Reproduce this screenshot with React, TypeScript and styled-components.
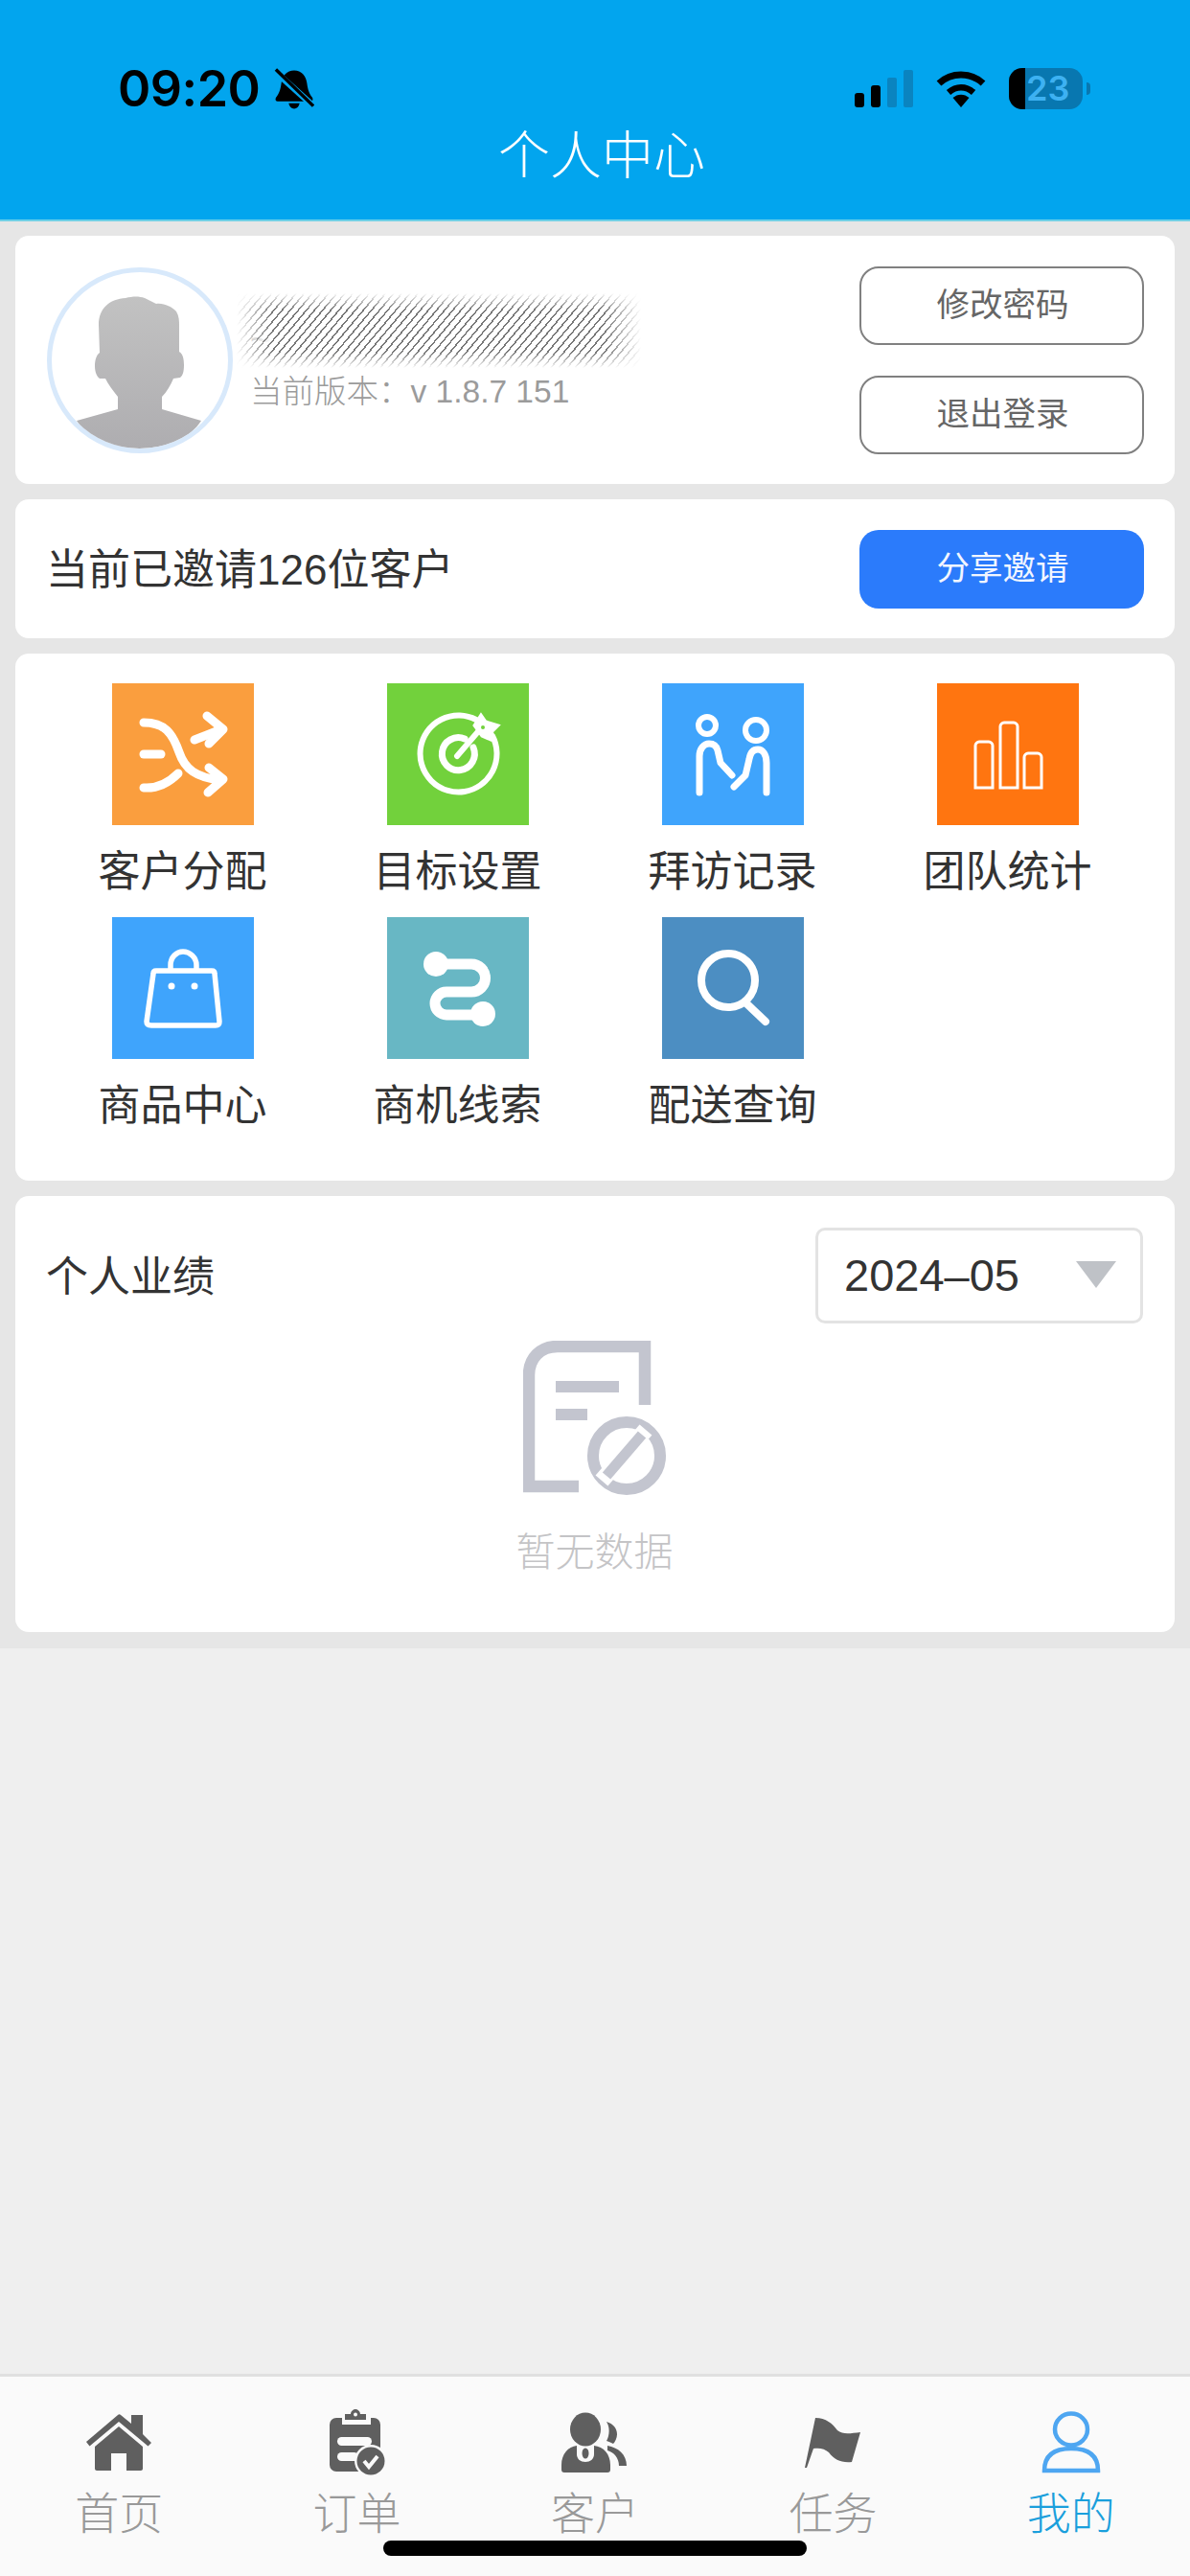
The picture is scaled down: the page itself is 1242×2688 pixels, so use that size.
import React from "react";
import styled, { createGlobalStyle } from "styled-components";

// ---------- status bar glyphs ----------

const MutedBell = () => (
    <svg width="42" height="45" viewBox="0 0 44 46">
        <path d="M22 3c8 0 13 6 14 14 1 7 2 11 6 16 1 2 0 4-2 4H4c-2 0-3-2-2-4 4-5 5-9 6-16C9 9 14 3 22 3z" fill="#000" />
        <path d="M16 39h12c-1 4-3 6-6 6s-5-2-6-6z" fill="#000" />
        <path d="M1 4l42 38" stroke="#02a5ee" strokeWidth="7" />
        <path d="M2 2l41 40" stroke="#000" strokeWidth="3.6" />
    </svg>
);

const SignalBars = () => (
    <svg width="61" height="39" viewBox="0 0 61 39">
        <rect x="0" y="24" width="10" height="15" rx="3" fill="#000" />
        <rect x="17" y="16" width="10" height="23" rx="3" fill="#000" />
        <rect x="34" y="8" width="10" height="31" rx="2" fill="#0a84c0" />
        <rect x="51" y="0" width="10" height="39" rx="2" fill="#0a84c0" />
    </svg>
);

const Wifi = () => (
    <svg width="52" height="39" viewBox="0 0 52 39" fill="none">
        <path d="M3 14C16 2 36 2 49 14" stroke="#000" strokeWidth="7" />
        <path d="M13 23.5c8-7 18-7 26 0" stroke="#000" strokeWidth="6.5" />
        <path d="M17.5 29c5-4.500 12-4.500 17 0L26 39z" fill="#000" />
    </svg>
);

const tinyIcon = "#5f5f5f";

// ---------- tab bar icons ----------

const HomeIcon = ({ color }: { color: string }) => (
    <svg width="70" height="60" viewBox="0 0 70 60" fill={color}>
        <path d="M1 29L34 1c1-1 2-1 3 0l11 9V1h12v20l9 9-3.500 3.500L35 8 4.500 33.500z" />
        <path d="M35 13l25 21v23c0 1-1 2-2 2H43V41H27v18H12c-1 0-2-1-2-2V34z" />
    </svg>
);

const OrderIcon = ({ color }: { color: string }) => (
    <svg width="58" height="70" viewBox="0 0 58 70">
        <rect x="0" y="9" width="53" height="56" rx="7" fill={color} />
        <path d="M13 8h30v8H13z" fill="#fafafa" />
        <path d="M16 11V5h6c0-3 3-5 5-5s5 2 5 5h6v6z" fill={color} />
        <circle cx="27" cy="5.500" r="2" fill="#fafafa" />
        <rect x="8" y="29" width="36" height="9" rx="4.500" fill="#fafafa" />
        <rect x="8" y="45" width="22" height="9" rx="4.500" fill="#fafafa" />
        <circle cx="43" cy="54" r="17" fill="#fafafa" />
        <circle cx="43" cy="54" r="14.500" fill={color} />
        <path d="M36 54l5 6 9-11" stroke="#fafafa" strokeWidth="4" fill="none" />
    </svg>
);

const CustomerIcon = ({ color }: { color: string }) => (
    <svg width="70" height="64" viewBox="0 0 70 64" fill={color}>
        <ellipse cx="25" cy="18" rx="16" ry="17.500" />
        <path d="M47 10c7 2 11 7 11 13 0 4-2 8-4 10-2-1-4-2-7-3 3-5 4-14 0-20z" />
        <path d="M48 35c11 2 20 9 20 21h-8c0-8-5-14-12-16z" />
        <path d="M16 35v9c0 5 4 8 9 8s9-3 9-8v-9c10 1 17 9 17 20v5c0 2-1 3-3 3H3c-2 0-3-1-3-3v-5c0-11 7-19 16-20z" />
        <ellipse cx="25" cy="43" rx="3.500" ry="5.500" />
    </svg>
);

const TaskIcon = ({ color }: { color: string }) => (
    <svg width="60" height="53" viewBox="0 0 60 53" fill={color}>
        <path d="M12 0c11 0 18 6 23 13 6 5 14 3 24 2L50 46c-11 1-18-2-24-10-4-4-10-5-16-4L3 52H1z" />
    </svg>
);

const MineIcon = ({ color }: { color: string }) => (
    <svg width="62" height="66" viewBox="0 0 62 66" fill="none" stroke={color} strokeWidth="4.500">
        <ellipse cx="31" cy="19" rx="17" ry="16.500" />
        <path d="M3 62c0-17 11-23 28-23s28 6 28 23z" />
    </svg>
);

// ---------- feature tile icons, all on a 148 square ----------

const ShuffleIcon = () => (
    <svg width="148" height="148" viewBox="0 0 148 148" fill="none" stroke="#fff" strokeWidth="9" strokeLinecap="round" strokeLinejoin="round">
        <path d="M33 41c22 0 30 11 37 31 6 18 18 26 42 29" />
        <path d="M101 88l15 12-16 14" />
        <path d="M86 59l28-11" />
        <path d="M99 34l17 14-15 15" />
        <path d="M33 74h18" />
        <path d="M33 109c14 1 26-5 36-15" />
    </svg>
);

const TargetIcon = () => (
    <svg width="148" height="148" viewBox="0 0 148 148" fill="none" stroke="#fff" strokeLinecap="round">
        <path d="M93 38A40 40 0 1 0 110 55" strokeWidth="6" />
        <path d="M81 58A17 17 0 1 0 90 67" strokeWidth="7" />
        <path d="M73 76L97 48" strokeWidth="6" />
        <path d="M91 44l7-11 5 7 13 4-6 6-2 9-9-4z" fill="#fff" strokeWidth="3" />
        <circle cx="100" cy="46" r="2" fill="#72d13c" stroke="none" />
    </svg>
);

const VisitIcon = () => (
    <svg width="148" height="148" viewBox="0 0 148 148" fill="none" stroke="#fff" strokeWidth="7" strokeLinecap="round" strokeLinejoin="round">
        <circle cx="47" cy="44" r="9" strokeWidth="6" />
        <circle cx="98" cy="49" r="11" strokeWidth="6" />
        <path d="M39 114V76c0-8 5-13 10-13 5 0 8 3 9 7l3 13 12 13" />
        <path d="M109 114V83c0-9-4-14-9-14-5 0-8 4-9 10l-4 17-12 12" />
    </svg>
);

const BarsIcon = () => (
    <svg width="148" height="148" viewBox="0 0 148 148" fill="none" stroke="#fff" strokeWidth="3">
        <path d="M40 109V65c0-2 2-4 4-4h10c2 0 4 2 4 4v44z" />
        <path d="M66 109V45c0-2 2-4 4-4h10c2 0 4 2 4 4v64z" />
        <path d="M91 109V77c0-2 2-4 4-4h10c2 0 4 2 4 4v32z" />
    </svg>
);

const BagIcon = () => (
    <svg width="148" height="148" viewBox="0 0 148 148" fill="none" stroke="#fff" strokeWidth="5.500" strokeLinejoin="round">
        <path d="M46 56h58c2 0 3 1 3 3l5 50c0 3-1 4-4 4H41c-3 0-5-1-5-4l7-50c0-2 1-3 3-3z" />
        <path d="M61 56V50c0-8 6-14 13-14s14 6 14 14v6" />
        <circle cx="62" cy="72" r="3.500" fill="#fff" stroke="none" />
        <circle cx="86" cy="72" r="3.500" fill="#fff" stroke="none" />
    </svg>
);

const RouteIcon = () => (
    <svg width="148" height="148" viewBox="0 0 148 148" fill="none" stroke="#fff" strokeWidth="11">
        <path d="M51 49H88A14.500 14.500 0 0 1 88 78H62A12 12 0 0 0 62 102H99" />
        <circle cx="51" cy="49" r="13" fill="#fff" stroke="none" />
        <circle cx="100" cy="101" r="13" fill="#fff" stroke="none" />
    </svg>
);

const SearchIcon = () => (
    <svg width="148" height="148" viewBox="0 0 148 148" fill="none" stroke="#fff" strokeWidth="8" strokeLinecap="round">
        <circle cx="69" cy="66" r="28" />
        <path d="M89 91l19 18" />
    </svg>
);

const EmptyDocIcon = () => (
    <svg width="150" height="161" viewBox="0 0 150 161" fill="none" stroke="#c3c5cf">
        <path d="M127 67V6H36C18 6 6 18 6 36V152H58" strokeWidth="12.500" />
        <path d="M34 48h66M34 77h33" strokeWidth="12" />
        <circle cx="108" cy="120" r="35" strokeWidth="12" />
        <path d="M82 146l46-53" stroke="#fff" strokeWidth="17" />
        <path d="M87 141l37-43" strokeWidth="11" />
    </svg>
);

const AvatarFigure = () => (
    <svg width="184" height="184" viewBox="5 5 184 184">
        <defs>
            <linearGradient id="figura" x1="0" y1="0" x2="0" y2="1">
                <stop offset="0" stopColor="#c2c2c2" />
                <stop offset="1" stopColor="#aeadb0" />
            </linearGradient>
        </defs>
        <path
            d="M54 60C54 42 66 33 82 32c8-2 14-2 20 0 4 2 8 4 12 6 8-1 16 3 21 8 3 5 3 10 3 15v27c4 2 5 8 5 14 0 6-1 11-4 13l-7 1c-3 7-7 14-12 19v13l41 12c-11 18-37 29-65 29s-54-11-65-29l43-12v-13c-5-6-10-13-13-19h-6c-3-2-5-7-5-13 0-7 2-12 5-14z"
            fill="url(#figura)"
        />
    </svg>
);

const tabs = [
    { label: "首页", Icon: HomeIcon },
    { label: "订单", Icon: OrderIcon },
    { label: "客户", Icon: CustomerIcon },
    { label: "任务", Icon: TaskIcon },
    { label: "我的", Icon: MineIcon, active: true },
];

const features = [
    { label: "客户分配", color: "#fa9e3e", Icon: ShuffleIcon },
    { label: "目标设置", color: "#72d13c", Icon: TargetIcon },
    { label: "拜访记录", color: "#3fa4fc", Icon: VisitIcon },
    { label: "团队统计", color: "#ff7510", Icon: BarsIcon },
    { label: "商品中心", color: "#3fa4fc", Icon: BagIcon },
    { label: "商机线索", color: "#68b7c4", Icon: RouteIcon },
    { label: "配送查询", color: "#4c8ec2", Icon: SearchIcon },
];

const App = () => {
    return (
        <>
            <GlobalStyle />
            <Page>
                <Header>
                    <StatusBar>
                        <StatusGroup>
                            <Clock>09:20</Clock>
                            <MutedBell />
                        </StatusGroup>
                        <StatusGroup>
                            <SignalBars />
                            <Wifi />
                            <Battery>
                                <BatteryLevel />
                                <BatteryText>23</BatteryText>
                                <BatteryTip />
                            </Battery>
                        </StatusGroup>
                    </StatusBar>
                    <Title>个人中心</Title>
                </Header>

                <Content>
                    <ProfileCard>
                        <Avatar>
                            <AvatarFigure />
                        </Avatar>
                        <ProfileInfo>
                            <Account>
                                ~&nbsp;&nbsp;&nbsp;&nbsp;&nbsp;00000000
                                <Scribble />
                            </Account>
                            <Version>当前版本：v 1.8.7 151</Version>
                        </ProfileInfo>
                        <ButtonColumn>
                            <OutlineButton type="button">修改密码</OutlineButton>
                            <OutlineButton type="button">退出登录</OutlineButton>
                        </ButtonColumn>
                    </ProfileCard>

                    <InviteCard>
                        <InviteText>当前已邀请126位客户</InviteText>
                        <ShareButton type="button">分享邀请</ShareButton>
                    </InviteCard>

                    <FeatureCard>
                        {features.map(({ label, color, Icon }) => (
                            <Feature key={label}>
                                <Tile $color={color}>
                                    <Icon />
                                </Tile>
                                <FeatureLabel>{label}</FeatureLabel>
                            </Feature>
                        ))}
                    </FeatureCard>

                    <StatsCard>
                        <StatsHeader>
                            <StatsTitle>个人业绩</StatsTitle>
                            <MonthSelect>
                                2024–05
                                <Caret />
                            </MonthSelect>
                        </StatsHeader>
                        <Empty>
                            <EmptyDocIcon />
                            <EmptyText>暂无数据</EmptyText>
                        </Empty>
                    </StatsCard>
                </Content>

                <Filler />

                <TabBar>
                    {tabs.map(({ label, Icon, active }) => (
                        <Tab key={label}>
                            <TabIcon>
                                <Icon color={active ? "#4ea6f1" : tinyIcon} />
                            </TabIcon>
                            <TabLabel $active={!!active}>{label}</TabLabel>
                        </Tab>
                    ))}
                    <HomeIndicator />
                </TabBar>
            </Page>
        </>
    );
};

const GlobalStyle = createGlobalStyle`
    html, body {
        margin: 0;
        padding: 0;
        background: #efefef;
    }

    body {
        font-family: "Liberation Sans", "Noto Sans CJK SC", sans-serif;
    }

    button {
        font-family: inherit;
    }
`;

const Page = styled.div`
    width: 1242px;
    min-height: 2688px;
    display: flex;
    flex-direction: column;
    background: #efefef;
`;

const Header = styled.header`
    height: 231px;
    box-sizing: border-box;
    padding-top: 70px;
    background: #02a5ee;
    border-bottom: 2px solid #6fd0e6;
`;

const StatusBar = styled.div`
    height: 45px;
    padding: 0 104px 0 123px;
    display: flex;
    justify-content: space-between;
    align-items: center;
`;

const StatusGroup = styled.div`
    display: flex;
    align-items: center;
    gap: 15px;

    &:last-child {
        gap: 24px;
    }
`;

const Clock = styled.span`
    font-family: Inter, "Liberation Sans", sans-serif;
    font-size: 52px;
    font-weight: 600;
    line-height: 45px;
    color: #000;
    letter-spacing: -0.5px;
`;

const Battery = styled.div`
    position: relative;
    width: 77px;
    height: 43px;
    margin-right: 8px;
    border-radius: 14px;
    background: #0877b0;
`;

const BatteryLevel = styled.div`
    position: absolute;
    left: 0;
    top: 0;
    bottom: 0;
    width: 17px;
    border-radius: 14px 0 0 14px;
    background: #000;
`;

const BatteryText = styled.span`
    position: absolute;
    left: 18px;
    top: 0;
    font-family: Inter, "Liberation Sans", sans-serif;
    font-size: 36px;
    font-weight: 600;
    line-height: 43px;
    color: #3db1f2;
`;

const BatteryTip = styled.div`
    position: absolute;
    right: -8px;
    top: 15px;
    width: 4px;
    height: 13px;
    border-radius: 0 4px 4px 0;
    background: #0877b0;
`;

const Title = styled.h1`
    margin: 22px 0 0;
    padding-left: 14px;
    font-size: 54px;
    font-weight: 300;
    line-height: 52px;
    text-align: center;
    color: #fff;
`;

const Content = styled.main`
    padding: 15px 16px 17px;
    display: flex;
    flex-direction: column;
    gap: 16px;
    background: #e6e6e6;
`;

const Card = styled.section`
    box-sizing: border-box;
    border-radius: 14px;
    background: #fff;
`;

const ProfileCard = styled(Card)`
    height: 259px;
    padding: 0 32px 0 33px;
    display: flex;
    align-items: center;
`;

const Avatar = styled.div`
    width: 194px;
    height: 194px;
    box-sizing: border-box;
    flex: none;
    border: 5px solid #d8e9fb;
    border-radius: 50%;
    overflow: hidden;
`;

const ProfileInfo = styled.div`
    flex: 1;
    margin-left: 18px;
    padding-bottom: 23px;
`;

const Account = styled.div`
    position: relative;
    height: 90px;
    font-size: 38px;
    line-height: 110px;
    color: #b5b5b5;
`;

const Scribble = styled.div`
    position: absolute;
    left: -14px;
    top: 6px;
    width: 422px;
    height: 78px;
    background: repeating-linear-gradient(-50deg, #777 0, #777 1.5px, #fff 1.5px, #fff 6.5px);
    mask-image: linear-gradient(90deg, transparent 0, #000 9%, #000 91%, transparent 100%), linear-gradient(180deg, transparent 0, #000 22%, #000 78%, transparent 100%);
    mask-composite: intersect;
`;

const Version = styled.div`
    font-size: 33.5px;
    line-height: 38px;
    font-weight: 300;
    color: #9b9b9b;
`;

const ButtonColumn = styled.div`
    display: flex;
    flex-direction: column;
    gap: 32px;
`;

const OutlineButton = styled.button`
    width: 297px;
    height: 82px;
    padding: 0 0 7px 2px;
    border: 2px solid #808080;
    border-radius: 20px;
    background: #fff;
    font-size: 34.5px;
    color: #666;
`;

const InviteCard = styled(Card)`
    height: 145px;
    padding: 0 32px;
    display: flex;
    justify-content: space-between;
    align-items: center;
`;

const InviteText = styled.span`
    padding-bottom: 6px;
    font-size: 44px;
    color: #333;
`;

const ShareButton = styled.button`
    width: 297px;
    height: 82px;
    padding: 0 0 7px 2px;
    border: none;
    border-radius: 20px;
    background: #2b7bfb;
    font-size: 34.5px;
    color: #f2f6ff;
`;

const FeatureCard = styled(Card)`
    padding: 31px 31px 53px;
    display: grid;
    grid-template-columns: repeat(4, 1fr);
    row-gap: 22px;
`;

const Feature = styled.div`
    display: flex;
    flex-direction: column;
    align-items: center;
`;

type TileProps = {
    $color: string;
};

const Tile = styled.div<TileProps>`
    width: 148px;
    height: 148px;
    background: ${(props) => props.$color};

    svg {
        display: block;
    }
`;

const FeatureLabel = styled.div`
    margin-top: 24px;
    font-size: 44px;
    line-height: 50px;
    color: #333;
`;

const StatsCard = styled(Card)`
    height: 455px;
    padding: 33px 33px 0 32px;
`;

const StatsHeader = styled.div`
    display: flex;
    justify-content: space-between;
    align-items: center;
`;

const StatsTitle = styled.h2`
    margin: 0;
    padding-bottom: 4px;
    font-size: 44px;
    font-weight: 400;
    color: #333;
`;

const MonthSelect = styled.div`
    width: 342px;
    height: 100px;
    box-sizing: border-box;
    padding: 0 25px 2px 27px;
    display: flex;
    justify-content: space-between;
    align-items: center;
    border: 3px solid #e3e3e3;
    border-radius: 10px;
    font-size: 47px;
    color: #333;
`;

const Caret = styled.span`
    width: 0;
    height: 0;
    border-left: 21px solid transparent;
    border-right: 21px solid transparent;
    border-top: 28px solid #bfc2c7;
`;

const Empty = styled.div`
    margin-top: 18px;
    display: flex;
    flex-direction: column;
    align-items: center;

    svg {
        display: block;
    }
`;

const EmptyText = styled.div`
    margin-top: 37px;
    font-size: 41px;
    font-weight: 300;
    line-height: 46px;
    color: #c4c4c6;
`;

const Filler = styled.div`
    flex: 1;
`;

const TabBar = styled.nav`
    position: relative;
    height: 211px;
    box-sizing: border-box;
    padding-top: 34px;
    display: grid;
    grid-template-columns: repeat(5, 1fr);
    border-top: 3px solid #e0e0e0;
    background: #fafafa;
`;

const Tab = styled.div`
    display: flex;
    flex-direction: column;
    align-items: center;
`;

const TabIcon = styled.div`
    height: 70px;
    display: flex;
    align-items: center;
    justify-content: center;
`;

type TabLabelProps = {
    $active: boolean;
};

const TabLabel = styled.span<TabLabelProps>`
    margin-top: 14px;
    font-size: 46px;
    font-weight: 300;
    line-height: 50px;
    color: ${(props) => (props.$active ? "#1a9fdc" : "#999")};
`;

const HomeIndicator = styled.div`
    position: absolute;
    left: 400px;
    bottom: 21px;
    width: 442px;
    height: 16px;
    border-radius: 8px;
    background: #000;
`;

export default App;
